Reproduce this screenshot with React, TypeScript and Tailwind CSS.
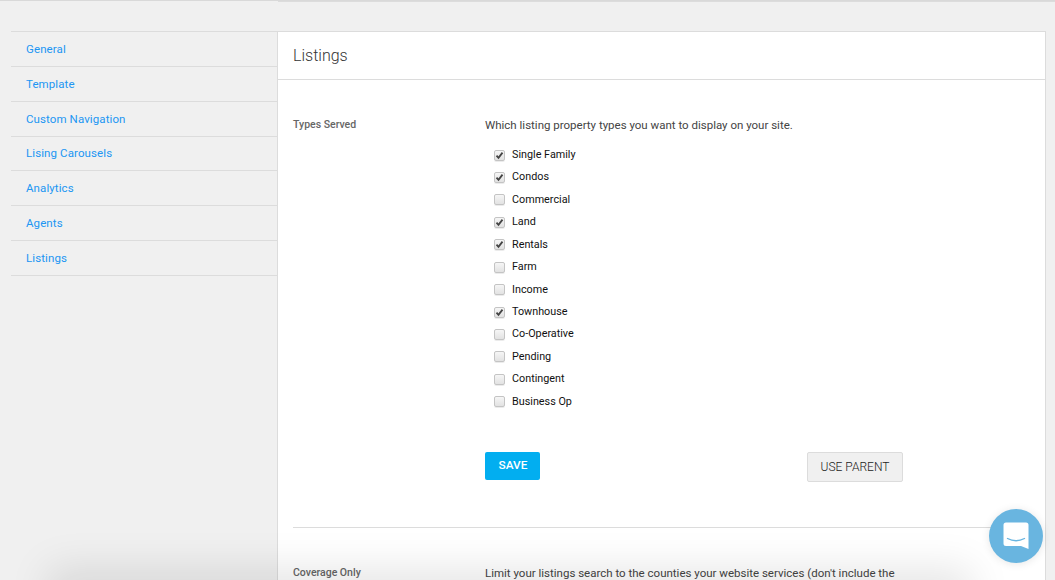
const navItems = [
  "General",
  "Template",
  "Custom Navigation",
  "Lising Carousels",
  "Analytics",
  "Agents",
  "Listings",
];

const propertyTypes = [
  { label: "Single Family", checked: true },
  { label: "Condos", checked: true },
  { label: "Commercial", checked: false },
  { label: "Land", checked: true },
  { label: "Rentals", checked: true },
  { label: "Farm", checked: false },
  { label: "Income", checked: false },
  { label: "Townhouse", checked: true },
  { label: "Co-Operative", checked: false },
  { label: "Pending", checked: false },
  { label: "Contingent", checked: false },
  { label: "Business Op", checked: false },
];

const Checkbox = ({ checked }: { checked: boolean }) => (
  <span className="flex h-[11px] w-[11px] items-center justify-center rounded-[2px] border border-[#c4c4c4] bg-gradient-to-b from-[#f6f6f6] to-[#e2e2e2] shadow-[0_1px_0_rgba(0,0,0,0.08)]">
    {checked && (
      <svg width="9" height="9" viewBox="0 0 9 9">
        <path d="M1.5 4.6 L3.5 6.8 L7.5 1.6" fill="none" stroke="#444444" strokeWidth="1.8" />
      </svg>
    )}
  </span>
);

export default function App() {
  return (
    <div className="relative h-[580px] w-[1055px] overflow-hidden bg-[#f0f0f0] font-['Roboto',sans-serif]">
      {/* Top edge */}
      <div className="flex h-[2px] border-t border-[#d9d9d9]">
        <div className="w-[278px]" />
        <div className="flex-1 border-t border-[#dcdcdc] bg-white" />
      </div>

      <div className="flex pl-[11px] pr-[9px] pt-[29px]">
        {/* Sidebar */}
        <nav className="w-[266px] shrink-0 border-t border-[#dcdcdc]">
          {navItems.map((item) => (
            <div
              key={item}
              className="flex h-[34.86px] items-center border-b border-[#dcdcdc] pl-[15px] pt-[1px] text-[11.5px] tracking-[0.1px] text-[#2196f3]"
            >
              {item}
            </div>
          ))}
        </nav>

        {/* Main panel */}
        <main className="h-[560px] flex-1 border-x border-t border-[#dcdcdc] bg-white">
          <div className="flex h-[48px] items-center border-b border-[#dcdcdc] pl-[15px] text-[16px] font-light text-[#333333]">
            Listings
          </div>

          <div className="mx-[15px] flex border-b border-[#dcdcdc] pb-[45px] pt-[37px]">
            <div className="w-[192px] shrink-0 text-[10.5px] leading-[16px] font-medium text-[#666666]">
              Types Served
            </div>
            <div>
              <div className="text-[11.5px] leading-[16px] text-[#444444]">
                Which listing property types you want to display on your site.
              </div>
              <div className="mt-[10.8px] pl-[9px]">
                {propertyTypes.map((type) => (
                  <div key={type.label} className="flex h-[22.45px] items-center gap-[7px]">
                    <Checkbox checked={type.checked} />
                    <span className="text-[10.8px] text-[#111111]">{type.label}</span>
                  </div>
                ))}
              </div>
              <div className="mt-[38.7px] flex w-[418px] items-start justify-between">
                <button className="h-[28px] w-[55px] rounded-[2px] bg-[#02aef0] pl-[1px] text-[11.8px] font-medium text-white">
                  SAVE
                </button>
                <button className="h-[30px] w-[96px] rounded-[2px] border border-[#dcdcdc] bg-[#f0f0f0] pt-[1px] text-[12px] font-light text-[#222222]">
                  USE PARENT
                </button>
              </div>
            </div>
          </div>

          <div className="mx-[15px] flex pt-[37px]">
            <div className="w-[192px] shrink-0 text-[10.5px] leading-[16px] font-medium text-[#666666]">
              Coverage Only
            </div>
            <div className="whitespace-nowrap text-[11.5px] leading-[16px] text-[#444444]">
              Limit your listings search to the counties your website services (don't include the
            </div>
          </div>
        </main>
      </div>

      {/* Shadow rising from below the window */}
      <div className="pointer-events-none absolute bottom-[-30px] left-[60px] h-[30px] w-[900px] shadow-[0_0_40px_12px_rgba(0,0,0,0.1)]" />

      {/* Chat launcher */}
      <div className="absolute left-[989px] top-[509px] flex h-[54px] w-[54px] items-center justify-center rounded-full bg-[#69b5e0] shadow-[0_1px_8px_rgba(0,0,0,0.1)]">
        <svg width="26" height="28" viewBox="0 0 26 28">
          <path
            d="M3 0.5 H23 A2.5 2.5 0 0 1 25.5 3 V27 L18 24 H3 A2.5 2.5 0 0 1 0.5 21.5 V3 A2.5 2.5 0 0 1 3 0.5 Z"
            fill="#ffffff"
          />
          <path
            d="M4.5 16.5 Q13 21 21.5 16.5"
            fill="none"
            stroke="#69b5e0"
            strokeWidth="1.4"
            strokeLinecap="round"
          />
        </svg>
      </div>
    </div>
  );
}
